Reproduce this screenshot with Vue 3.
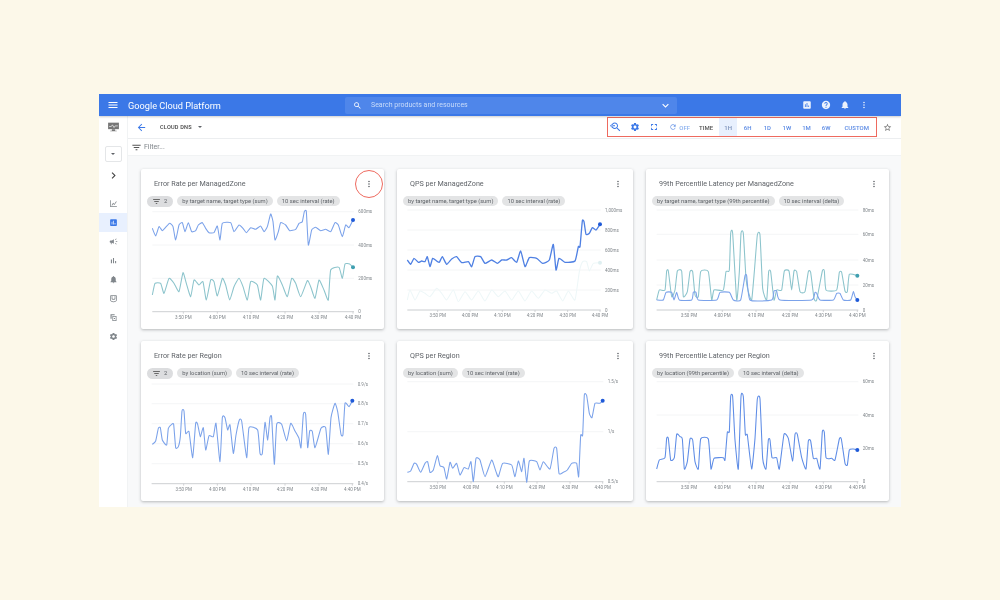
<template>
  <div class="frame">
    <header class="topbar">
      <svg class="ico menu-ico" viewBox="0 0 24 24"><path :d="icons.menu" /></svg>
      <span class="brand">Google Cloud Platform</span>
      <div class="search">
        <svg class="ico search-ico" viewBox="0 0 24 24"><path :d="icons.search" /></svg>
        <span class="search-text">Search products and resources</span>
        <svg class="ico search-more" viewBox="0 0 24 24"><path :d="icons.expand" /></svg>
      </div>
      <div class="top-icons">
        <svg v-for="name in ['assess', 'help', 'bell', 'kebab']" :key="name" class="ico" viewBox="0 0 24 24"><path :d="icons[name]" /></svg>
      </div>
    </header>

    <div class="body">
      <aside class="sidebar">
        <svg class="monitor" viewBox="0 0 24 18">
          <path d="M2 1h20v12H2z" fill="#777" />
          <path d="M9 13h6v3H9zM6 16h12v1H6z" fill="#777" />
          <path d="M4 8h4l2-3 3 5 2-3h5" fill="none" stroke="#fff" stroke-width="1.2" />
        </svg>
        <div class="project-box"><span class="caret"></span></div>
        <svg class="ico chevron" viewBox="0 0 24 24"><path :d="icons.chevron" /></svg>
        <nav class="side-nav">
          <div v-for="item in sideItems" :key="item" class="side-item" :class="{ active: item === 'assess' }">
            <svg class="ico" viewBox="0 0 24 24"><path :d="icons[item]" /></svg>
          </div>
        </nav>
      </aside>

      <main class="main">
        <div class="toolbar">
          <svg class="ico back" viewBox="0 0 24 24"><path :d="icons.back" /></svg>
          <span class="crumb">CLOUD DNS</span>
          <span class="crumb-caret"></span>
          <div class="time-controls">
            <svg class="ico tool-ico zoom-reset" viewBox="0 0 24 24"><path :d="icons.zoomReset" /></svg>
            <svg class="ico tool-ico" viewBox="0 0 24 24"><path :d="icons.gear" /></svg>
            <svg class="ico tool-ico" viewBox="0 0 24 24"><path :d="icons.fullscreen" /></svg>
            <span class="auto-refresh">
              <svg class="ico refresh" viewBox="0 0 24 24"><path :d="icons.refresh" /></svg>
              OFF
            </span>
            <span class="time-label">TIME</span>
            <span v-for="range in ranges" :key="range" class="range" :class="{ selected: range === '1H' }">{{ range }}</span>
          </div>
          <svg class="ico star" viewBox="0 0 24 24"><path :d="icons.star" /></svg>
        </div>

        <div class="filter-row">
          <svg class="ico filter-ico" viewBox="0 0 24 24"><path :d="icons.filter" /></svg>
          <span>Filter...</span>
        </div>

        <div class="grid">
          <section v-for="(chart, index) in charts" :key="chart.title" class="card">
            <div class="card-head">
              <span class="card-title">{{ chart.title }}</span>
              <span class="kebab-wrap">
                <svg class="ico kebab" viewBox="0 0 24 24"><path :d="icons.kebab" /></svg>
                <span v-if="index === 0" class="callout"></span>
              </span>
            </div>
            <div class="chips">
              <span v-if="chart.filtered" class="chip filter-chip">
                <svg class="ico chip-ico" viewBox="0 0 24 24"><path :d="icons.filter" /></svg>
                2
              </span>
              <span v-for="chip in chart.chips" :key="chip" class="chip">{{ chip }}</span>
            </div>
            <svg class="plot" :style="{ width: chart.width + 'px' }" :viewBox="viewBox(chart)">
              <line v-for="grid in chart.grid" :key="grid.y" :x1="chart.x0" :x2="chart.x1" :y1="grid.y" :y2="grid.y" class="gridline" />
              <line :x1="chart.x0" :x2="chart.x1" :y1="baseline(chart)" :y2="baseline(chart)" class="axis" />
              <g v-for="(tick, i) in chart.ticks" :key="tick">
                <line :x1="tick" :x2="tick" :y1="baseline(chart)" :y2="baseline(chart) + 6" class="axis" />
                <text :x="tick" :y="baseline(chart) + 22" text-anchor="middle" class="tick-text">{{ times[i] }}</text>
              </g>
              <text v-for="grid in chart.grid" :key="grid.label" :x="chart.x1 + 13" :y="grid.y + 5" class="tick-text">{{ grid.label }}</text>
              <g v-for="line in chart.lines" :key="line.color">
                <path :d="smooth(line.points)" :stroke="line.color" :stroke-width="line.weight || 3.2" class="series" />
                <circle v-if="line.dot" :cx="lastPoint(line)[0]" :cy="lastPoint(line)[1]" r="6" :fill="line.dot" />
              </g>
            </svg>
          </section>
        </div>
      </main>
    </div>
  </div>
</template>

<script setup>
const BLUE = '#7ba2ea'
const BLUE_DARK = '#5f8de6'
const BLUE_DOT = '#1f5ad8'
const TEAL = '#8cc4cc'
const TEAL_DOT = '#3f9fb0'

const searchPath = 'M15.5 14h-.79l-.28-.27C15.41 12.59 16 11.11 16 9.5 16 5.91 13.09 3 9.5 3S3 5.91 3 9.5 5.91 16 9.5 16c1.61 0 3.09-.59 4.23-1.57l.27.28v.79l5 4.99L20.49 19l-4.99-5zm-6 0C7.01 14 5 11.99 5 9.5S7.01 5 9.5 5 14 7.01 14 9.5 11.99 14 9.5 14z'

const icons = {
  menu: 'M3 18h18v-2H3v2zm0-5h18v-2H3v2zm0-7v2h18V6H3z',
  search: searchPath,
  expand: 'M16.59 8.59L12 13.17 7.41 8.59 6 10l6 6 6-6z',
  assess: 'M19 3H5c-1.1 0-2 .9-2 2v14c0 1.1.9 2 2 2h14c1.1 0 2-.9 2-2V5c0-1.1-.9-2-2-2zM9 17H7v-7h2v7zm4 0h-2V7h2v10zm4 0h-2v-4h2v4z',
  help: 'M12 2C6.48 2 2 6.48 2 12s4.48 10 10 10 10-4.48 10-10S17.52 2 12 2zm1 17h-2v-2h2v2zm2.07-7.75l-.9.92C13.45 12.9 13 13.5 13 15h-2v-.5c0-1.1.45-2.1 1.17-2.83l1.24-1.26c.37-.36.59-.86.59-1.41 0-1.1-.9-2-2-2s-2 .9-2 2H8c0-2.21 1.79-4 4-4s4 1.79 4 4c0 .88-.36 1.68-.93 2.25z',
  bell: 'M12 22c1.1 0 2-.9 2-2h-4c0 1.1.89 2 2 2zm6-6v-5c0-3.07-1.64-5.64-4.5-6.32V4c0-.83-.67-1.5-1.5-1.5s-1.5.67-1.5 1.5v.68C7.63 5.36 6 7.92 6 11v5l-2 2v1h16v-1l-2-2z',
  kebab: 'M12 8c1.1 0 2-.9 2-2s-.9-2-2-2-2 .9-2 2 .9 2 2 2zm0 2c-1.1 0-2 .9-2 2s.9 2 2 2 2-.9 2-2-.9-2-2-2zm0 6c-1.1 0-2 .9-2 2s.9 2 2 2 2-.9 2-2-.9-2-2-2z',
  back: 'M20 11H7.83l5.59-5.59L12 4l-8 8 8 8 1.41-1.41L7.83 13H20v-2z',
  filter: 'M10 18h4v-2h-4v2zM3 6v2h18V6H3zm3 7h12v-2H6v2z',
  chevron: 'M10 6L8.59 7.41 13.17 12l-4.58 4.59L10 18l6-6z',
  gear: 'M19.14 12.94c.04-.3.06-.61.06-.94 0-.32-.02-.64-.07-.94l2.03-1.58c.18-.14.23-.41.12-.61l-1.92-3.32c-.12-.22-.37-.29-.59-.22l-2.39.96c-.5-.38-1.03-.7-1.62-.94l-.36-2.54c-.04-.24-.24-.41-.48-.41h-3.84c-.24 0-.43.17-.47.41l-.36 2.54c-.59.24-1.13.57-1.62.94l-2.39-.96c-.22-.08-.47 0-.59.22L2.74 8.87c-.12.21-.08.47.12.61l2.03 1.58c-.05.3-.09.63-.09.94s.02.64.07.94l-2.03 1.58c-.18.14-.23.41-.12.61l1.92 3.32c.12.22.37.29.59.22l2.39-.96c.5.38 1.03.7 1.62.94l.36 2.54c.05.24.24.41.48.41h3.84c.24 0 .44-.17.47-.41l.36-2.54c.59-.24 1.13-.56 1.62-.94l2.39.96c.22.08.47 0 .59-.22l1.92-3.32c.12-.22.07-.47-.12-.61l-2.01-1.58zM12 15.6c-1.98 0-3.6-1.62-3.6-3.6s1.62-3.6 3.6-3.6 3.6 1.62 3.6 3.6-1.62 3.6-3.6 3.6z',
  fullscreen: 'M7 14H5v5h5v-2H7v-3zm-2-4h2V7h3V5H5v5zm12 7h-3v2h5v-5h-2v3zM14 5v2h3v3h2V5h-5z',
  star: 'M22 9.24l-7.19-.62L12 2 9.19 8.63 2 9.24l5.46 4.73L5.82 21 12 17.27 18.18 21l-1.63-7.03L22 9.24zM12 15.4l-3.76 2.27 1-4.28-3.32-2.88 4.38-.38L12 6.1l1.71 4.04 4.38.38-3.32 2.88 1 4.28L12 15.4z',
  refresh: 'M17.65 6.35C16.2 4.9 14.21 4 12 4c-4.42 0-7.99 3.58-7.99 8s3.57 8 7.99 8c3.73 0 6.84-2.55 7.73-6h-2.08c-.82 2.33-3.04 4-5.65 4-3.31 0-6-2.69-6-6s2.69-6 6-6c1.66 0 3.14.69 4.22 1.78L13 11h7V4l-2.35 2.35z',
  zoomReset: searchPath + 'M0 9.5L4 5.5v3h6v2H4v3z',
  lineChart: 'M3 3h2v16h16v2H3V3zm4 13l4-6 3 3 5-7 1.6 1.2L14.3 16l-3-3-2.6 4H7v-1z',
  rocket: 'M18 11v2h4v-2h-4zm-2 6.61c.96.71 2.21 1.65 3.2 2.39.4-.53.8-1.07 1.2-1.6-.99-.74-2.24-1.68-3.2-2.4-.4.54-.8 1.08-1.2 1.61zM20.4 5.6c-.4-.53-.8-1.07-1.2-1.6-.99.74-2.24 1.68-3.2 2.4.4.53.8 1.07 1.2 1.6.96-.72 2.21-1.65 3.2-2.4zM4 9c-1.1 0-2 .9-2 2v2c0 1.1.9 2 2 2h1v4h2v-4h1l5 3V6L8 9H4z',
  bars: 'M5 9.2h3V19H5zM10.6 5h2.8v14h-2.8zm5.6 8H19v6h-2.8z',
  uptime: 'M5 3h14c1.1 0 2 .9 2 2v11c0 3-4 6-9 6s-9-3-9-6V5c0-1.1.9-2 2-2zm0 2v11c0 1.7 3 4 7 4s7-2.3 7-4V5h-2v8c0 1-2 2-5 2s-5-1-5-2V5H5zm4 0v7c.6.5 1.6 1 3 1s2.4-.5 3-1V5H9z',
  copy: 'M4 3h11v3H7v9H4V3zm5 5h11v13H9V8zm2 2v9h7v-9h-7zm2 3h3v3h-3v-3z'
}

const sideItems = ['lineChart', 'assess', 'rocket', 'bars', 'bell', 'uptime', 'copy', 'gear']
const ranges = ['1H', '6H', '1D', '1W', '1M', '6W', 'CUSTOM']
const times = ['3:50 PM', '4:00 PM', '4:10 PM', '4:20 PM', '4:30 PM', '4:40 PM']

// Every series is measured at 3x from a crop of the dashboard, origin is that crop's corner
const charts = [
  {
    title: 'Error Rate per ManagedZone',
    filtered: true,
    chips: ['by target name, target type (sum)', '10 sec interval (rate)'],
    width: 243, cardX: 141, cardY: 169, origin: [99, 190], x0: 160, x1: 765,
    ticks: [253, 355, 456, 558, 660, 762],
    grid: [{ y: 65, label: '600ms' }, { y: 165, label: '400ms' }, { y: 265, label: '200ms' }, { y: 365, label: '0' }],
    lines: [
      { color: BLUE, dot: BLUE_DOT, points: '160,115 170,138 180,110 190,122 200,112 212,100 222,110 230,150 240,105 250,98 258,125 268,98 278,125 290,122 298,105 310,98 320,115 330,128 345,128 355,108 363,150 370,100 395,98 405,125 420,105 432,115 442,128 455,113 470,118 485,108 495,125 505,110 515,72 522,95 528,150 538,125 545,98 560,105 572,122 590,118 600,100 610,95 616,65 622,65 628,165 638,120 650,112 665,122 680,118 695,125 708,98 718,105 730,140 740,105 750,113 762,90' },
      { color: TEAL, dot: TEAL_DOT, points: '160,315 168,280 185,280 195,310 210,265 225,280 240,305 252,248 262,280 275,320 285,270 300,285 312,275 322,330 335,270 345,275 355,318 370,265 380,285 392,330 405,290 420,265 432,290 445,330 455,275 475,285 485,330 495,265 520,288 528,330 535,258 550,285 565,320 578,265 590,280 605,320 625,272 635,290 648,325 660,270 675,300 688,330 695,240 720,232 730,265 738,222 752,222 762,232' }
    ]
  },
  {
    title: 'QPS per ManagedZone',
    chips: ['by target name, target type (sum)', '10 sec interval (rate)'],
    width: 236, cardX: 397, cardY: 169, origin: [390, 165], x0: 52, x1: 632,
    ticks: [143, 240, 337, 435, 533, 630],
    grid: [{ y: 135, label: '1,000ms' }, { y: 195, label: '800ms' }, { y: 255, label: '600ms' }, { y: 315, label: '400ms' }, { y: 375, label: '200ms' }, { y: 435, label: '0' }],
    lines: [
      { color: '#eef7f8', dot: '#dfeff1', points: '52,405 60,375 75,405 90,378 105,385 120,395 140,370 155,385 170,405 190,375 205,410 225,380 245,405 265,378 285,408 305,375 325,395 345,378 365,405 385,378 405,408 425,378 445,400 465,375 485,385 500,378 518,408 535,378 555,405 568,320 578,290 590,290 598,318 610,295 630,293' },
      { color: '#4f80e3', dot: BLUE_DOT, weight: 4, points: '52,285 62,298 72,280 85,292 95,288 105,290 112,275 120,305 128,280 140,288 148,292 157,275 170,298 185,282 200,275 215,293 235,290 245,305 255,275 272,275 285,295 305,285 322,295 335,285 350,285 365,278 380,292 392,258 405,305 418,278 440,280 458,295 478,285 490,238 498,315 507,280 525,292 555,288 565,245 570,245 577,168 582,170 588,208 598,205 607,188 618,195 630,178' }
    ]
  },
  {
    title: '99th Percentile Latency per ManagedZone',
    chips: ['by target name, target type (99th percentile)', '10 sec interval (delta)'],
    width: 243, cardX: 646, cardY: 169, origin: [640, 165], x0: 50, x1: 655,
    ticks: [147, 247, 348, 450, 550, 652],
    grid: [{ y: 135, label: '80ms' }, { y: 208, label: '60ms' }, { y: 285, label: '40ms' }, { y: 360, label: '20ms' }, { y: 435, label: '0' }],
    lines: [
      { color: TEAL, dot: TEAL_DOT, points: '50,405 58,375 75,375 80,318 85,318 95,395 105,375 112,318 125,318 130,395 142,380 150,320 158,320 165,390 175,395 182,320 205,320 215,405 222,375 250,375 258,320 268,315 272,205 278,205 290,405 298,320 303,205 310,205 318,340 325,380 335,405 343,320 352,210 360,210 368,370 380,405 386,320 392,320 402,405 410,375 425,375 433,318 447,318 455,375 462,318 470,320 480,380 495,380 505,320 512,322 522,400 530,405 547,318 553,318 558,375 590,375 598,322 605,322 615,378 622,380 628,328 652,332' },
      { color: BLUE, dot: BLUE_DOT, points: '50,405 70,405 78,382 95,382 102,405 110,382 118,405 155,405 160,382 168,382 175,405 230,405 240,382 268,382 280,405 302,405 315,332 320,332 330,405 395,405 402,378 410,378 420,405 515,405 525,382 530,385 540,405 580,405 590,385 600,385 610,405 632,405 640,380 645,395 652,405' }
    ]
  },
  {
    title: 'Error Rate per Region',
    filtered: true,
    chips: ['by location (sum)', '10 sec interval (rate)'],
    width: 243, cardX: 141, cardY: 341, origin: [135, 335], x0: 50, x1: 655,
    ticks: [146, 247, 348, 450, 552, 652],
    grid: [{ y: 147, label: '0.9/s' }, { y: 206, label: '0.8/s' }, { y: 266, label: '0.7/s' }, { y: 326, label: '0.6/s' }, { y: 386, label: '0.5/s' }, { y: 446, label: '0.4/s' }],
    lines: [
      { color: BLUE, dot: BLUE_DOT, points: '52,328 62,318 70,280 76,278 82,315 95,330 100,280 110,268 116,268 122,338 130,335 136,305 141,228 147,228 152,295 162,290 173,368 182,265 188,268 196,305 205,278 212,345 222,302 235,305 243,265 255,380 262,248 270,248 278,285 285,270 295,355 303,300 313,255 320,258 335,368 342,278 368,285 375,355 382,355 390,262 398,315 405,248 410,248 418,388 425,268 440,268 455,318 467,265 480,288 492,310 498,338 505,238 512,238 518,338 524,288 532,290 540,338 558,280 572,278 580,358 588,248 600,205 608,230 618,298 624,298 630,205 642,215 652,197' }
    ]
  },
  {
    title: 'QPS per Region',
    chips: ['by location (sum)', '10 sec interval (rate)'],
    width: 236, cardX: 397, cardY: 341, origin: [390, 335], x0: 52, x1: 640,
    ticks: [143, 243, 343, 441, 540, 638],
    grid: [{ y: 140, label: '1.5/s' }, { y: 290, label: '1/s' }, { y: 440, label: '0.5/s' }],
    lines: [
      { color: BLUE, dot: BLUE_DOT, points: '52,412 62,408 72,385 80,388 92,412 105,385 113,380 120,412 130,405 142,362 150,392 162,398 170,432 180,382 188,400 200,385 210,420 222,398 235,402 243,380 250,440 258,370 270,375 285,425 305,375 318,410 325,425 338,385 365,390 375,425 385,378 395,410 402,370 410,442 418,378 440,380 450,405 460,380 480,402 492,340 500,340 507,415 520,412 532,405 545,385 560,385 566,425 572,302 578,300 583,180 590,182 598,235 606,248 615,205 630,205 638,197' }
    ]
  },
  {
    title: '99th Percentile Latency per Region',
    chips: ['by location (99th percentile)', '10 sec interval (delta)'],
    width: 243, cardX: 646, cardY: 341, origin: [640, 335], x0: 50, x1: 655,
    ticks: [147, 247, 348, 450, 550, 652],
    grid: [{ y: 140, label: '60ms' }, { y: 240, label: '40ms' }, { y: 340, label: '20ms' }, { y: 440, label: '0' }],
    lines: [
      { color: BLUE_DARK, dot: BLUE_DOT, points: '50,402 58,375 75,368 80,310 85,310 92,375 103,368 110,298 120,305 127,312 133,402 142,380 150,312 158,315 165,380 175,402 182,312 205,312 213,402 222,370 250,368 255,375 262,292 268,290 272,185 278,185 285,315 295,402 303,185 310,185 316,298 322,300 335,402 345,310 352,192 360,192 368,370 378,402 385,315 390,315 396,368 410,368 418,402 432,298 445,310 458,378 465,298 472,298 485,368 498,402 505,318 512,318 520,370 530,370 540,402 547,290 553,292 558,368 575,370 585,375 598,312 604,312 615,385 622,390 628,345 640,342 652,345' }
    ]
  }
]

const PLOT_TOP = 38
const PLOT_HEIGHT = 122

function viewBox(chart) {
  const x = (chart.cardX - chart.origin[0]) * 3
  const y = (chart.cardY + PLOT_TOP - chart.origin[1]) * 3
  return `${x} ${y} ${chart.width * 3} ${PLOT_HEIGHT * 3}`
}

function baseline(chart) {
  return chart.grid[chart.grid.length - 1].y
}

function lastPoint(line) {
  return line.points.split(' ').pop().split(',').map(Number)
}

// Catmull-Rom through the points, a bit tighter than usual so flat tops stay flat
function smooth(points) {
  const pts = points.split(' ').map(p => p.split(',').map(Number))
  let d = `M${pts[0][0]} ${pts[0][1]}`
  for (let i = 0; i < pts.length - 1; i++) {
    const a = pts[i - 1] || pts[i]
    const b = pts[i]
    const c = pts[i + 1]
    const e = pts[i + 2] || c
    const k = 0.08
    d += ` C${b[0] + (c[0] - a[0]) * k} ${b[1] + (c[1] - a[1]) * k} ${c[0] - (e[0] - b[0]) * k} ${c[1] - (e[1] - b[1]) * k} ${c[0]} ${c[1]}`
  }
  return d
}
</script>

<style scoped>
.frame {
  width: 802px;
  height: 413px;
  margin: 94px 0 0 99px;
  overflow: hidden;
  display: flex;
  flex-direction: column;
  background: #fff;
  font-family: Roboto, "Liberation Sans", sans-serif;
  color: #5f6368;
  filter: blur(0.6px);
}

.ico {
  display: block;
  flex: none;
  width: 10px;
  height: 10px;
  fill: currentColor;
}

.topbar {
  flex: none;
  height: 22px;
  display: flex;
  align-items: center;
  background: #3b78e7;
  color: #fff;
  box-shadow: 0 1px 2px rgba(0, 0, 0, 0.2);
  position: relative;
}

.menu-ico {
  width: 12px;
  height: 12px;
  margin-left: 8px;
}

.brand {
  margin-left: 9px;
  width: 217px;
  font-size: 9.2px;
  white-space: nowrap;
}

.search {
  width: 332px;
  height: 17px;
  display: flex;
  align-items: center;
  background: #4f86ea;
  border-radius: 2px;
  color: #c9dcfa;
}

.search-ico {
  width: 9px;
  height: 9px;
  margin-left: 8px;
  color: #fff;
}

.search-text {
  margin-left: 9px;
  font-size: 7px;
  flex: 1;
}

.search-more {
  width: 13px;
  height: 13px;
  margin-right: 5px;
  color: #fff;
}

.top-icons {
  margin-left: 125px;
  display: flex;
  gap: 9px;
  opacity: 0.9;
}

.body {
  flex: 1;
  display: flex;
  min-height: 0;
}

.sidebar {
  flex: none;
  width: 29px;
  display: flex;
  flex-direction: column;
  align-items: center;
  background: #fff;
  border-right: 1px solid #f1f3f4;
  box-sizing: border-box;
}

.monitor {
  width: 13px;
  height: 10px;
  margin-top: 6px;
}

.project-box {
  width: 17px;
  height: 16px;
  margin-top: 14px;
  border: 1px solid #e4e6e8;
  border-radius: 2px;
  box-sizing: border-box;
  display: flex;
  align-items: center;
  justify-content: center;
}

.caret {
  border-left: 2px solid transparent;
  border-right: 2px solid transparent;
  border-top: 2px solid #5f6368;
}

.chevron {
  width: 13px;
  height: 13px;
  margin-top: 7px;
  color: #444;
}

.side-nav {
  width: 100%;
  margin-top: 12px;
}

.side-item {
  height: 19px;
  display: flex;
  align-items: center;
  justify-content: center;
  color: #80868b;
}

.side-item.active {
  background: #e8f0fe;
  color: #3b78e7;
}

.side-item .ico {
  width: 9px;
  height: 9px;
}

.main {
  flex: 1;
  min-width: 0;
  display: flex;
  flex-direction: column;
  background: #f8f9fa;
}

.toolbar {
  flex: none;
  height: 23px;
  display: flex;
  align-items: center;
  background: #fff;
  border-bottom: 1px solid #eceef0;
  box-sizing: border-box;
}

.back {
  width: 11px;
  height: 11px;
  margin-left: 8px;
  color: #3b78e7;
}

.crumb {
  margin-left: 13px;
  font-size: 5.6px;
  font-weight: 500;
  color: #444;
  letter-spacing: 0.2px;
}

.crumb-caret {
  margin-left: 6px;
  border-left: 2px solid transparent;
  border-right: 2px solid transparent;
  border-top: 2.5px solid #5f6368;
}

.time-controls {
  margin-left: 405px;
  width: 270px;
  height: 20px;
  display: flex;
  align-items: center;
  border: 1.4px solid #ee6a5f;
  box-sizing: border-box;
  color: #3b78e7;
  font-size: 6px;
  font-weight: 500;
}

.tool-ico {
  width: 10px;
  height: 10px;
  margin-right: 9.5px;
}

.zoom-reset {
  width: 12px;
  height: 12px;
  margin-left: 2px;
  margin-right: 8px;
}

.auto-refresh {
  display: flex;
  align-items: center;
  gap: 2px;
  margin-left: 0.5px;
  color: #8ab0ee;
}

.refresh {
  width: 8px;
  height: 8px;
  color: #6f9ae8;
}

.time-label {
  margin: 0 6px 0 9px;
  color: #555;
}

.range {
  width: 18px;
  height: 100%;
  margin-right: 1.6px;
  display: flex;
  align-items: center;
  justify-content: center;
  color: #5b8ae4;
}

.range:last-child {
  width: 38px;
  margin-left: 1px;
  margin-right: 0;
}

.range.selected {
  background: #e8f0fe;
  color: #7a8fb8;
}

.star {
  margin-left: 6px;
  width: 9px;
  height: 9px;
  color: #666;
}

.filter-row {
  flex: none;
  height: 17px;
  display: flex;
  align-items: center;
  background: #fff;
  border-bottom: 1px solid #f1f3f4;
  box-sizing: border-box;
  font-size: 7px;
  color: #80868b;
}

.filter-ico {
  width: 11px;
  height: 11px;
  margin: 0 2px 0 3px;
  color: #555;
}

.grid {
  display: grid;
  grid-template-columns: 243px 236px 243px;
  grid-auto-rows: 160px;
  column-gap: 13px;
  row-gap: 12px;
  padding: 13px 0 0 13px;
}

.card {
  display: flex;
  flex-direction: column;
  background: #fff;
  border-radius: 2px;
  box-shadow: 0 1px 3px rgba(60, 64, 67, 0.35);
  overflow: visible;
}

.card-head {
  height: 26px;
  flex: none;
  display: flex;
  align-items: center;
  justify-content: space-between;
  padding: 3px 10px 0 13px;
  box-sizing: border-box;
}

.card-title {
  font-size: 7.2px;
  color: #5f6368;
}

.kebab-wrap {
  position: relative;
  display: block;
}

.kebab {
  width: 10px;
  height: 10px;
}

/* red ring drawn over the first card's menu */
.callout {
  position: absolute;
  left: -9px;
  top: -9px;
  width: 28px;
  height: 28px;
  border: 1.6px solid #ee6a5f;
  border-radius: 50%;
  box-sizing: border-box;
}

.chips {
  height: 12px;
  flex: none;
  display: flex;
  align-items: center;
  gap: 4px;
  padding-left: 6px;
}

.chip {
  height: 10px;
  padding: 0 5px;
  display: flex;
  align-items: center;
  background: #e3e4e5;
  border-radius: 5px;
  font-size: 5.8px;
  color: #5f6368;
  white-space: nowrap;
}

.filter-chip {
  height: 11px;
  gap: 3px;
  padding: 0 6px 0 5px;
  background: #dcdddf;
  border-radius: 6px;
}

.chip-ico {
  width: 9px;
  height: 9px;
  color: #444;
}

.plot {
  display: block;
  flex: none;
  height: 122px;
}

.gridline {
  stroke: #eef0f1;
  stroke-width: 2;
}

.axis {
  stroke: #c8cacc;
  stroke-width: 2.5;
}

.tick-text {
  font-size: 13.5px;
  fill: #80868b;
  font-family: Roboto, "Liberation Sans", sans-serif;
}

.series {
  fill: none;
  stroke-linejoin: round;
}
</style>

<style>
html,
body {
  background: #fcf8e9;
  height: 100%;
}
#app {
  height: 100%;
  overflow: hidden;
}
</style>
